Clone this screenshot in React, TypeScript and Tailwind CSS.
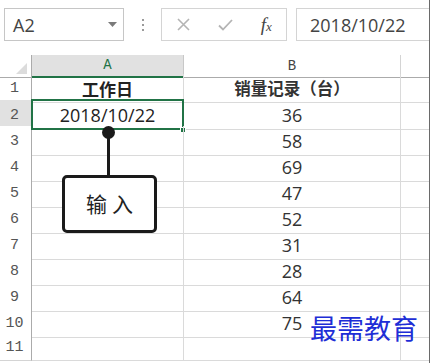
import React from "react";

const rows: { a: string; b: string; bold?: boolean }[] = [
  { a: "工作日", b: "销量记录（台）", bold: true },
  { a: "2018/10/22", b: "36" },
  { a: "", b: "58" },
  { a: "", b: "69" },
  { a: "", b: "47" },
  { a: "", b: "52" },
  { a: "", b: "31" },
  { a: "", b: "28" },
  { a: "", b: "64" },
  { a: "", b: "75" },
  { a: "", b: "" },
];

const mono = { fontFamily: '"Liberation Mono", "DejaVu Sans Mono", monospace' };
const sans = { fontFamily: '"Open Sans", "Noto Sans CJK SC", sans-serif' };
const cjk = { fontFamily: '"Noto Sans CJK SC", "Open Sans", sans-serif' };

export default function App() {
  return (
    <div className="relative flex h-[363px] w-[432px] overflow-hidden bg-white">
      <div className="flex w-[429px] flex-col">
        {/* Formula bar */}
        <div className="flex h-[55px] shrink-0 items-start pl-[4px] pt-[8px]">
          <div className="flex h-[33px] w-[120px] items-center justify-between border border-[#c6c6c6] pl-[8px] pr-[6px]">
            <span className="text-[18px] leading-none text-[#444]" style={sans}>A2</span>
            <svg width="9" height="5" viewBox="0 0 9 5"><path d="M0 0 L9 0 L4.5 5 Z" fill="#7a7a7a" /></svg>
          </div>
          <div className="flex h-[33px] w-[37px] flex-col items-center justify-center gap-[3px]">
            <span className="h-[2px] w-[2px] bg-[#9a9a9a]" />
            <span className="h-[2px] w-[2px] bg-[#9a9a9a]" />
            <span className="h-[2px] w-[2px] bg-[#9a9a9a]" />
          </div>
          <div className="flex h-[33px] w-[126px] items-center border border-[#d4d4d4]">
            <div className="flex w-[44px] justify-center">
              <svg width="13" height="13" viewBox="0 0 13 13"><path d="M1 1 L12 12 M12 1 L1 12" stroke="#b4b4b4" strokeWidth="1.6" /></svg>
            </div>
            <div className="flex w-[42px] justify-center">
              <svg width="15" height="12" viewBox="0 0 15 12"><path d="M1 6.5 L5 10.5 L14 1" stroke="#b4b4b4" strokeWidth="1.8" fill="none" /></svg>
            </div>
            <div className="flex w-[40px] justify-center">
              <span className="italic leading-none text-[#444]" style={{ fontFamily: '"Liberation Serif", serif' }}>
                <span className="text-[19px]">f</span>
                <span className="text-[13px]">x</span>
              </span>
            </div>
          </div>
          <div className="ml-[9px] flex h-[33px] flex-1 items-center border border-r-0 border-[#d4d4d4] pl-[13px]">
            <span className="text-[18px] leading-none text-[#444]" style={sans}>2018/10/22</span>
          </div>
        </div>

        {/* Column headers */}
        <div className="grid h-[19px] shrink-0 grid-cols-[32px_152px_217px_28px]">
          <div className="relative border-b border-r border-[#ababab]">
            <svg className="absolute bottom-[3px] right-[4px]" width="11" height="11" viewBox="0 0 11 11"><path d="M11 0 L11 11 L0 11 Z" fill="#dcdcdc" /></svg>
          </div>
          <div className="flex items-center justify-center border-b-2 border-r border-b-[#217346] border-r-[#c8c8c8] bg-[#e1e1e1] text-[14px] text-[#217346]" style={mono}>A</div>
          <div className="flex items-center justify-center border-b border-r border-b-[#ababab] border-r-[#d4d4d4] text-[14px] text-[#444]" style={mono}>B</div>
          <div className="border-b border-[#ababab]" />
        </div>

        {/* Rows */}
        {rows.map((r, i) => (
          <div key={i} className="grid h-[26px] shrink-0 grid-cols-[32px_152px_217px_28px]">
            <div
              className={`flex items-center justify-center border-b border-r border-b-[#d4d4d4] border-r-[#ababab] pr-[2px] pt-[3px] text-[15px] text-[#555] ${i === 1 ? "bg-[#e1e1e1]" : "bg-white"}`}
              style={mono}
            >
              {i + 1}
            </div>
            <div
              className={`relative flex items-center justify-center border-b border-r border-[#dadada] pt-[2px] text-[#222] ${r.bold ? "text-[17px] font-bold" : "text-[18px]"}`}
              style={r.bold ? cjk : sans}
            >
              {r.a}
              {i === 1 && (
                <>
                  <div className="absolute inset-[-1px] border-2 border-[#217346]" />
                  <div className="absolute bottom-[-4px] right-[-3px] h-[6px] w-[6px] border border-white bg-[#217346]" />
                </>
              )}
            </div>
            <div
              className={`flex items-center justify-center border-b border-r border-[#dadada] pt-[2px] text-[#333] ${r.bold ? "text-[16.5px] font-bold text-[#222]" : "text-[18px]"}`}
              style={r.bold ? cjk : sans}
            >
              {r.b}
            </div>
            <div className="border-b border-[#dadada]" />
          </div>
        ))}
      </div>
      <div className="w-[1px] bg-[#6a6a6a]" />
      <div className="w-[2px] bg-white" />

      {/* Callout */}
      <div className="absolute left-[102px] top-[126px] h-[13px] w-[13px] rounded-full bg-[#1a1a1a]" />
      <div className="absolute left-[107px] top-[132px] h-[44px] w-[3px] bg-[#1a1a1a]" />
      <div className="absolute left-[62px] top-[175px] flex h-[58px] w-[95px] items-center justify-center rounded-[5px] border-[3px] border-[#1a1a1a] bg-white">
        <span className="pl-[5px] text-[21px] tracking-[5px] text-[#222]" style={cjk}>输入</span>
      </div>

      {/* Watermark */}
      <div className="absolute left-[310px] top-[314px] text-[27px] leading-none text-[#1e2ed6]" style={{ fontFamily: '"Noto Sans CJK SC", sans-serif' }}>
        最需教育
      </div>
    </div>
  );
}
